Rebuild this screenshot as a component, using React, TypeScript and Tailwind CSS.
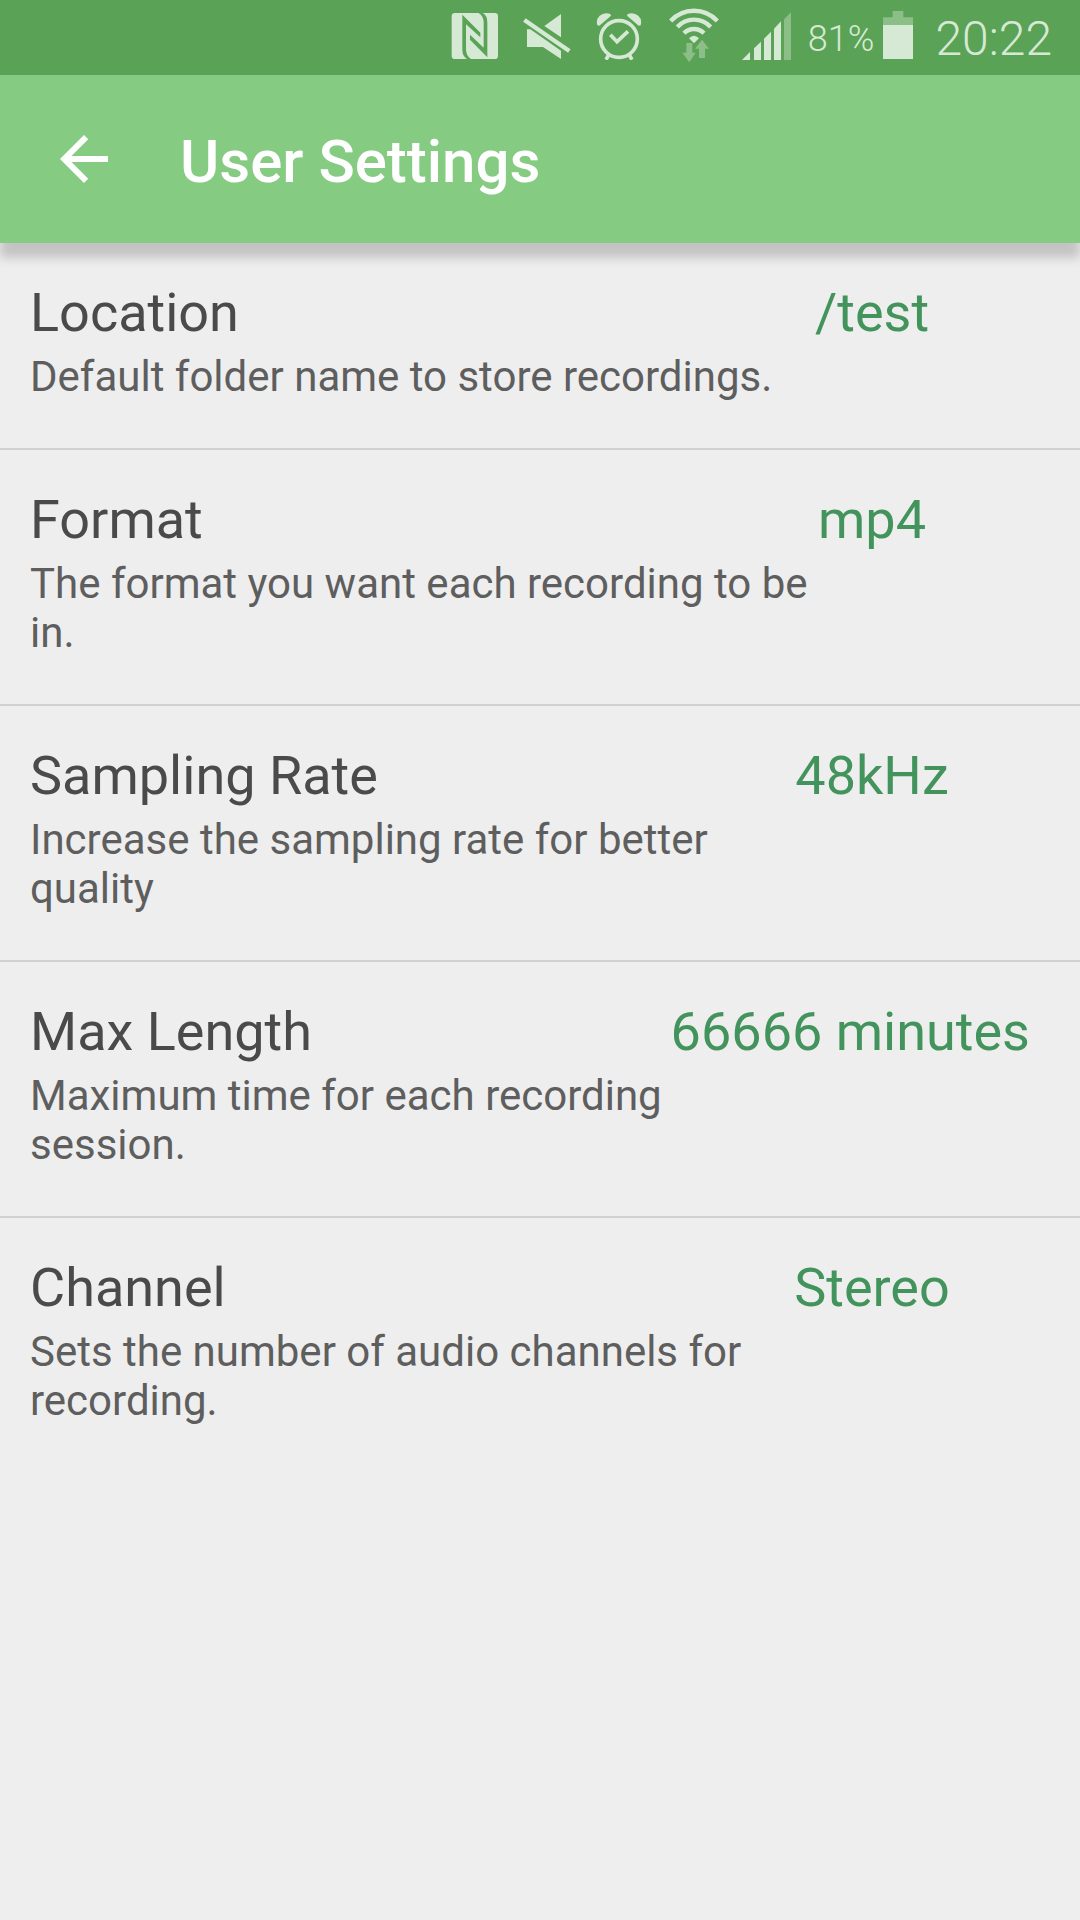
type Setting = {
  name: string;
  description: string;
  value: string;
};

const settings: Setting[] = [
  {
    name: "Location",
    description: "Default folder name to store recordings.",
    value: "/test",
  },
  {
    name: "Format",
    description: "The format you want each recording to be in.",
    value: "mp4",
  },
  {
    name: "Sampling Rate",
    description: "Increase the sampling rate for better quality",
    value: "48kHz",
  },
  {
    name: "Max Length",
    description: "Maximum time for each recording session.",
    value: "66666 minutes",
  },
  {
    name: "Channel",
    description: "Sets the number of audio channels for recording.",
    value: "Stereo",
  },
];

const App = () => {
  return (
    <div className="min-h-screen bg-[#eeeeee] font-['Roboto',sans-serif]">
      <StatusBar />
      <AppBar title="User Settings" />

      <main className="divide-y-2 divide-[#d0d1d0]">
        {settings.map((setting) => (
          <SettingRow key={setting.name} {...setting} />
        ))}
      </main>
    </div>
  );
};

const AppBar = ({ title }: { title: string }) => {
  return (
    <header className="relative flex h-[168px] items-center bg-[#85cc82] pl-12 text-white shadow-[0_15px_10px_0_rgba(0,0,0,0.18)]">
      <button type="button" aria-label="Back" className="cursor-pointer">
        <svg viewBox="0 0 24 24" className="size-[72px]" fill="currentColor">
          <path d="M20 11H7.83l5.59-5.59L12 4l-8 8 8 8 1.41-1.41L7.83 13H20v-2z" />
        </svg>
      </button>
      <h1 className="ml-[60px] pt-1.5 text-[60px] leading-[70px] font-medium">
        {title}
      </h1>
    </header>
  );
};

const SettingRow = ({ name, description, value }: Setting) => {
  return (
    <button
      type="button"
      className="block w-full cursor-pointer pt-[38px] pr-[50px] pb-[47px] pl-[30px] text-left"
    >
      <span className="flex justify-between text-[54px] leading-[63px]">
        <span className="text-[#4a4a4a]">{name}</span>
        <span className="min-w-[316px] text-center text-[#43935d]">
          {value}
        </span>
      </span>
      <span className="mt-2 block max-w-[784px] text-[42px] leading-[49px] text-[#5e5e5e]">
        {description}
      </span>
    </button>
  );
};

const StatusBar = () => {
  return (
    <div className="flex h-[75px] items-center justify-end bg-[#5aa255] pr-7 pb-[3px] text-[#d6e9d4]">
      <div className="flex items-center gap-6">
        <NfcIcon />
        <MuteIcon />
        <AlarmIcon />
        <WifiIcon />
        <SignalIcon />
      </div>
      <span className="ml-4 pt-1.5 text-[36px] leading-[42px] font-light">
        81%
      </span>
      <BatteryIcon />
      <span className="ml-[22px] pt-1.5 text-[48px] leading-[56px] font-light">
        20:22
      </span>
    </div>
  );
};

const NfcIcon = () => (
  <svg viewBox="30 36 141 144" className="h-12 w-[47px]">
    <rect x="32" y="39" width="139" height="138" rx="10" fill="currentColor" />
    <g fill="#5aa255">
      <path d="M64 44L118 98V112L75 73V148Q75 168 90 177H78Q64 170 64 148Z" />
      <path d="M139 172L87 119V104L128 143V68Q128 48 113 39H125Q139 46 139 68Z" />
    </g>
  </svg>
);

const MuteIcon = () => (
  <svg viewBox="243 36 147 144" className="h-12 w-[49px]" fill="currentColor">
    <path d="M310 78L360 42V112Z" />
    <path d="M258 88H268L360 152V177L306 141H258Z" />
    <path d="M250 60L385 153" stroke="currentColor" strokeWidth="13" />
  </svg>
);

const AlarmIcon = () => (
  <svg
    viewBox="462 36 144 144"
    className="h-12 w-12"
    fill="none"
    stroke="currentColor"
    strokeWidth="11"
  >
    <circle cx="534" cy="117" r="55" />
    <path d="M508 104L528 125L561 94" />
    <path d="M503 165L495 179M565 165L573 179" />
    <g fill="currentColor" stroke="none">
      <path d="M469 76Q464 58 476 47Q490 35 508 42L510 47L475 77Z" />
      <path d="M599 76Q604 58 592 47Q578 35 560 42L558 47L593 77Z" />
    </g>
  </svg>
);

const WifiIcon = () => (
  <svg
    viewBox="48 27 153 162"
    className="h-[54px] w-[51px] overflow-visible"
    fill="none"
    stroke="currentColor"
    strokeWidth="13"
  >
    <path d="M59 63A95 95 0 0 1 199 63" />
    <path d="M79 81A68 68 0 0 1 179 81" />
    <path d="M99 100A41 41 0 0 1 159 100" />
    <g fill="currentColor" stroke="none">
      <path d="M114 115Q129 100 144 115L129 130Z" />
      <path
        d="M106 129H124V158H134L115 187L94 158H106Z"
        className="opacity-40"
      />
      <path
        d="M144 174H162V146H174L153 119L132 146H144Z"
        className="opacity-40"
      />
    </g>
  </svg>
);

const SignalIcon = () => (
  <svg viewBox="273 36 150 144" className="h-12 w-[50px]" fill="currentColor">
    <path d="M273 180L297 156V180Z" />
    <path d="M309 180V145L330 125V180Z" />
    <path d="M339 180V116L360 95V180Z" />
    <path d="M369 180V86L390 64V180Z" />
    <path d="M399 180V58L420 37V180Z" className="opacity-40" />
  </svg>
);

const BatteryIcon = () => (
  <svg
    viewBox="69 30 90 156"
    className="ml-[9px] h-[52px] w-[30px]"
    fill="currentColor"
  >
    <path d="M98 33H130V52H159V75H69V52H98Z" className="opacity-40" />
    <path d="M69 75H159V177H69Z" />
  </svg>
);

export default App;
